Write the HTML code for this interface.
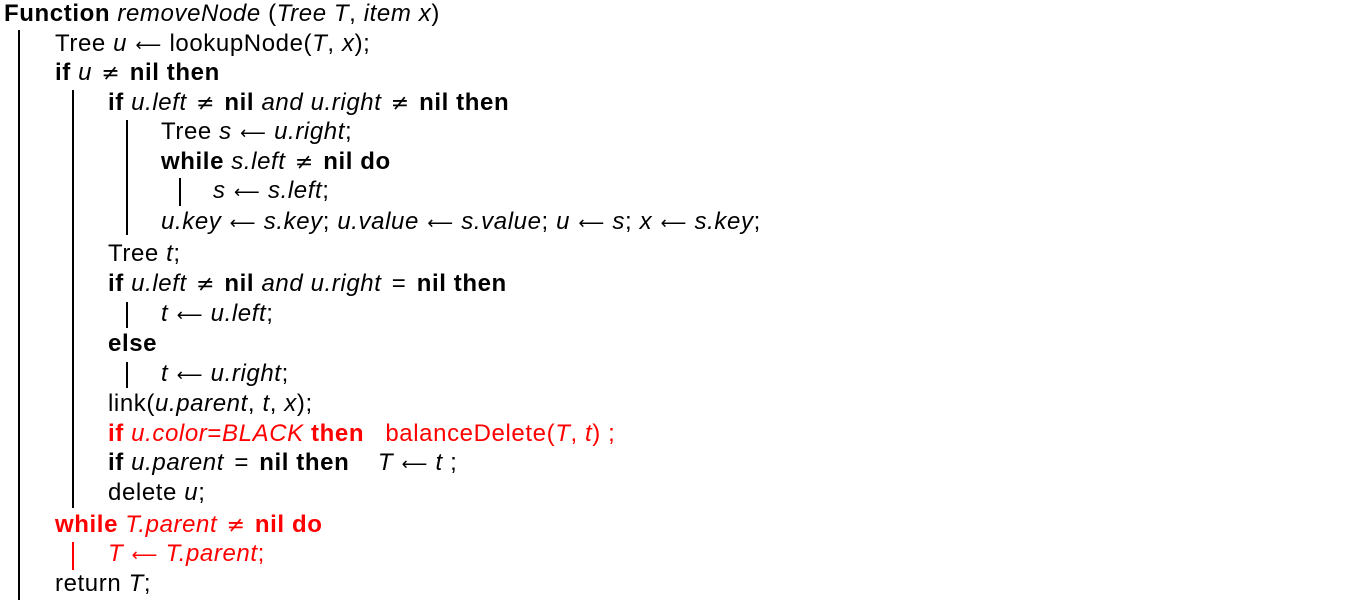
<!DOCTYPE html>
<html><head><meta charset="utf-8"><style>
body{margin:0;width:1356px;height:606px;background:#fff;position:relative;overflow:hidden;font-family:"Liberation Sans","DejaVu Sans",sans-serif;font-size:24px;letter-spacing:0.6px;color:#000}
.l{position:absolute;white-space:pre;line-height:26px;height:26px}
i{font-style:italic}
b{font-weight:bold}
.r{color:#f00}
.a{font-family:"DejaVu Sans",sans-serif;font-size:22px;margin:0 2px}
.e{margin:0 3px}
.w{font-family:"DejaVu Sans",sans-serif;font-size:18px;letter-spacing:0;margin:0 1px}
.g{display:inline-block;width:14px}
.v{position:absolute;width:2px;background:#000}
</style></head><body>
<div class="v" style="left:18px;top:30px;height:570px"></div>
<div class="v" style="left:72px;top:90px;height:418px"></div>
<div class="v" style="left:126px;top:120px;height:115px"></div>
<div class="v" style="left:179px;top:178px;height:28px"></div>
<div class="v" style="left:126px;top:302px;height:26px"></div>
<div class="v" style="left:126px;top:362px;height:26px"></div>
<div class="v" style="left:72px;top:542px;height:28px;background:#f00"></div>

<div class="l" style="left:4px;top:1px"><b>Function</b> <i>removeNode</i> (<i>Tree T</i>, <i>item x</i>)</div>
<div class="l" style="left:55px;top:31px">Tree <i>u</i> <span class="w">⟵</span> lookupNode(<i>T</i>, <i>x</i>);</div>
<div class="l" style="left:55px;top:60px"><b>if</b> <i>u</i> <span class="a">≠</span> <b>nil then</b></div>
<div class="l" style="left:108px;top:90px"><b>if</b> <i>u.left</i> <span class="a">≠</span> <b>nil</b> <i>and u.right</i> <span class="a">≠</span> <b>nil then</b></div>
<div class="l" style="left:161px;top:119px">Tree <i>s</i> <span class="w">⟵</span> <i>u.right</i>;</div>
<div class="l" style="left:161px;top:149px"><b>while</b> <i>s.left</i> <span class="a">≠</span> <b>nil do</b></div>
<div class="l" style="left:213px;top:178px"><i>s</i> <span class="w">⟵</span> <i>s.left</i>;</div>
<div class="l" style="left:161px;top:209px"><i>u.key</i> <span class="w">⟵</span> <i>s.key</i>; <i>u.value</i> <span class="w">⟵</span> <i>s.value</i>; <i>u</i> <span class="w">⟵</span> <i>s</i>; <i>x</i> <span class="w">⟵</span> <i>s.key</i>;</div>
<div class="l" style="left:108px;top:241px">Tree <i>t</i>;</div>
<div class="l" style="left:108px;top:271px"><b>if</b> <i>u.left</i> <span class="a">≠</span> <b>nil</b> <i>and u.right</i> <span class="e">=</span> <b>nil then</b></div>
<div class="l" style="left:161px;top:301px"><i>t</i> <span class="w">⟵</span> <i>u.left</i>;</div>
<div class="l" style="left:108px;top:331px"><b>else</b></div>
<div class="l" style="left:161px;top:361px"><i>t</i> <span class="w">⟵</span> <i>u.right</i>;</div>
<div class="l" style="left:108px;top:391px">link(<i>u.parent</i>, <i>t</i>, <i>x</i>);</div>
<div class="l r" style="left:108px;top:421px"><b>if</b> <i>u.color</i>=<i>BLACK</i> <b>then</b><span class="g"></span> balanceDelete(<i>T</i>, <i>t</i>) ;</div>
<div class="l" style="left:108px;top:450px"><b>if</b> <i>u.parent</i> <span class="e">=</span> <b>nil then</b><span class="g"></span>  <i>T</i> <span class="w">⟵</span> <i>t</i> ;</div>
<div class="l" style="left:108px;top:480px">delete <i>u</i>;</div>
<div class="l r" style="left:55px;top:512px"><b>while</b> <i>T.parent</i> <span class="a">≠</span> <b>nil do</b></div>
<div class="l r" style="left:108px;top:541px"><i>T</i> <span class="w">⟵</span> <i>T.parent</i>;</div>
<div class="l" style="left:55px;top:571px">return <i>T</i>;</div>
</body></html>
